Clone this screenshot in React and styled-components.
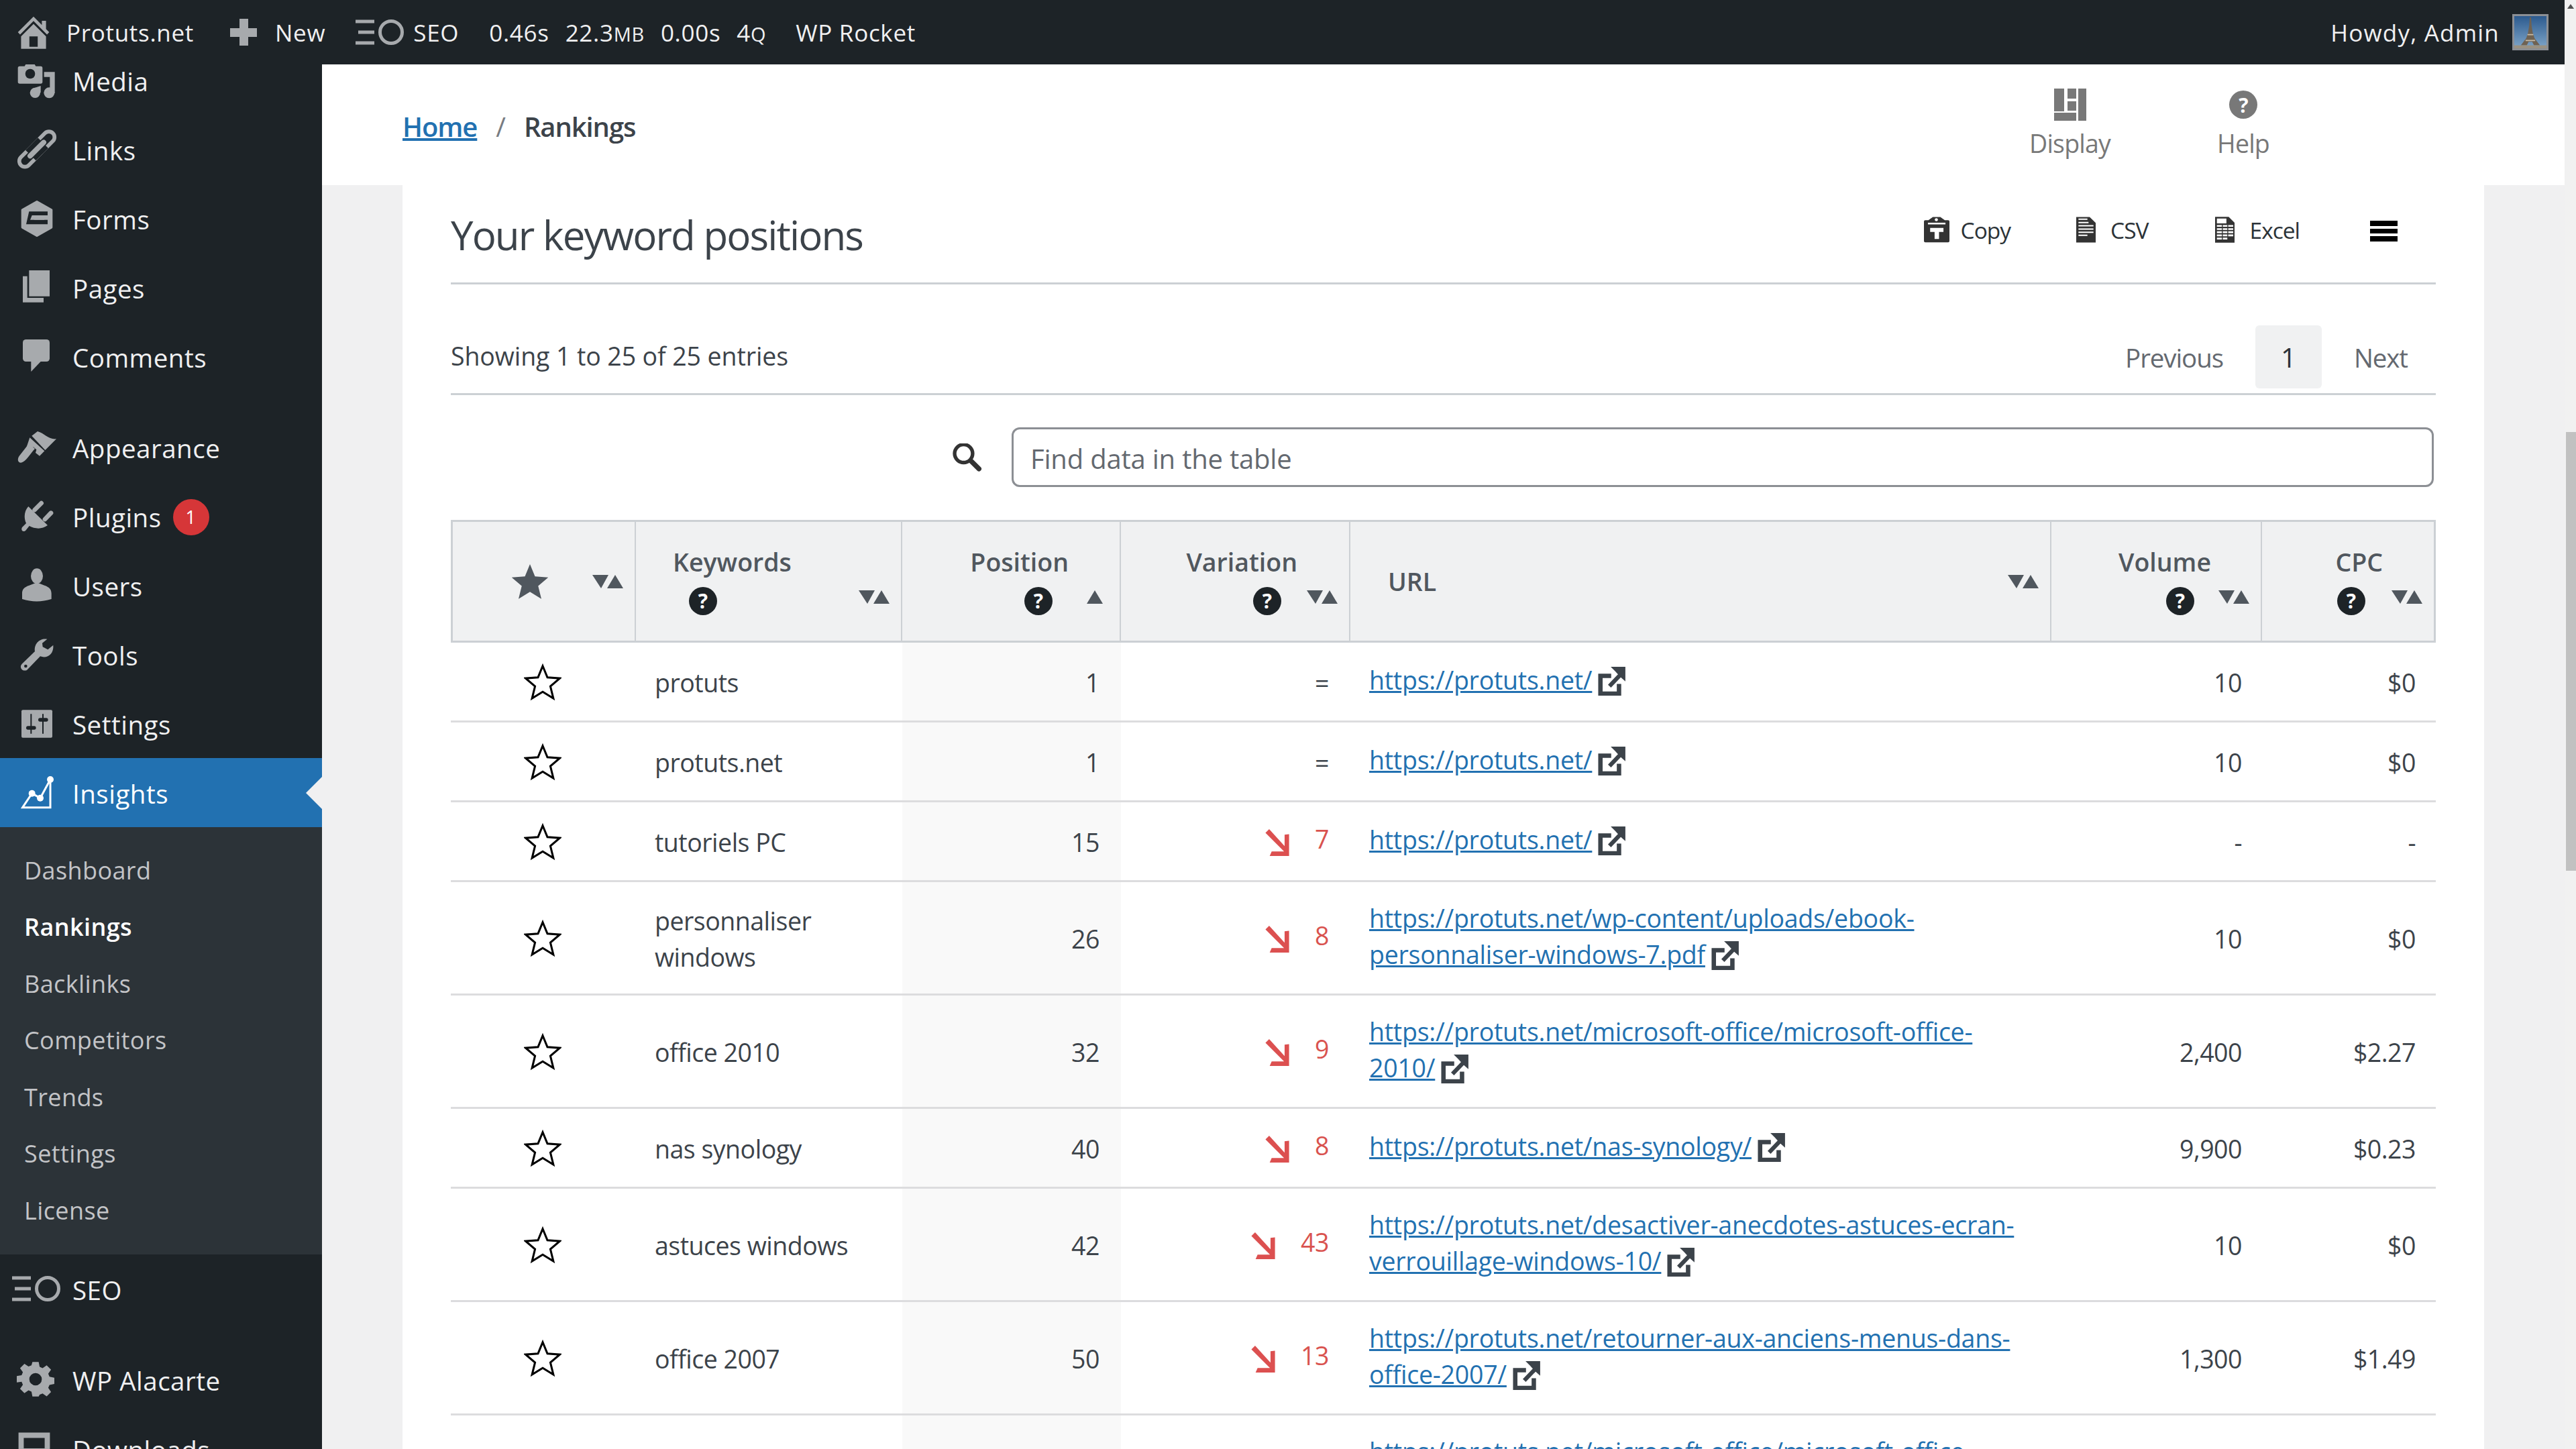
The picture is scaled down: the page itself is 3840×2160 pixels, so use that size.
import React from 'react'
import styled, { createGlobalStyle } from 'styled-components'

const GlobalStyle = createGlobalStyle`
    * { box-sizing: border-box; }
    html, body { margin: 0; padding: 0; height: 100%; overflow: hidden; background: #f0f0f1; }
    body { font-family: "Open Sans", "Noto Sans", sans-serif; color: #3c434a; }
`

const Icon = ({ box, size = 60, children, className }) => (
    <svg className={className} viewBox={box} width={size} height={size} fill="currentColor">{children}</svg>
)

const menuIcons = {
    media: (
        <Icon box="45 -12 180 180">
            <path d="M50 22q0-8 8-8h22l12-20h26l12 20h22q8 0 8 8v62q0 8-8 8H58q-8 0-8-8z" />
            <circle cx="105" cy="48" r="22" fill="#1d2327" />
            <path d="M167 40h48v95h-22V62h-26z" />
            <circle cx="127" cy="133" r="23" />
            <circle cx="190" cy="133" r="24" />
            <path d="M122 112l30-10v30h-30z" />
        </Icon>
    ),
    links: (
        <Icon box="45 297 180 180">
            <g transform="rotate(-45 135 385)" fill="none" stroke="currentColor" strokeWidth="17">
                <rect x="34" y="360" width="122" height="50" rx="25" />
                <rect x="114" y="360" width="122" height="50" rx="25" />
                <rect x="96" y="352" width="78" height="66" fill="#1d2327" stroke="none" />
                <line x1="92" y1="385" x2="178" y2="385" strokeWidth="23" strokeLinecap="round" />
            </g>
        </Icon>
    ),
    forms: (
        <Icon box="40 606 180 180">
            <path d="M130 620l65 37v78l-65 37-65-37v-78z" stroke="currentColor" strokeWidth="10" strokeLinejoin="round" />
            <path d="M95 664h83v17h-70l-8 20h78v20H82z" fill="#1d2327" />
            <path d="M118 690h45v11h-45z" />
        </Icon>
    ),
    pages: (
        <Icon box="40 915 180 180">
            <path d="M95 927h92v116H95z" />
            <path d="M67 953h20v97h73v20H67z" />
        </Icon>
    ),
    comments: (
        <Icon box="40 1224 180 180">
            <rect x="67" y="1236" width="120" height="99" rx="14" />
            <path d="M104 1330v50l48-50z" />
        </Icon>
    ),
    appearance: (
        <Icon box="45 20 180 180">
            <path d="M112 58l26-20c30 8 50 38 84 34l-50 50z" />
            <path d="M103 66l66 60-22 22-18-14 4-14-14-12-20 16-12-10z" />
            <path d="M100 92l26 24c-20 20-40 60-62 62-14 1-18-16-8-30z" />
        </Icon>
    ),
    plugins: (
        <Icon box="40 330 180 180">
            <path d="M92 375l86 84c-26 20-58 16-82 3l-16 20c-10 10-24 0-16-14l18-18c-12-26-8-56 10-75z" />
            <path d="M120 390l30-30M166 432l27-28" stroke="currentColor" strokeWidth="20" strokeLinecap="round" />
        </Icon>
    ),
    users: (
        <Icon box="42 640 180 180">
            <ellipse cx="132" cy="687" rx="27" ry="34" />
            <path d="M66 790v-25c0-34 36-34 66-50 30 16 65 16 65 50v25c-44 14-88 14-131 0z" />
        </Icon>
    ),
    tools: (
        <Icon box="42 945 180 180">
            <path d="M178 965c-32-6-60 20-55 55l-58 56c-14 15 2 36 22 28l60-62c30 12 62-10 58-50l-24 20-23-12-2-17z" />
            <circle cx="82" cy="1086" r="7" fill="#1d2327" />
        </Icon>
    ),
    settings: (
        <Icon box="46 1254 180 180">
            <rect x="67" y="1282" width="138" height="124" rx="6" />
            <g stroke="#1d2327" strokeWidth="6">
                <path d="M110 1300v88M163 1300v88" />
            </g>
            <rect x="88" y="1354" width="44" height="16" rx="8" fill="#1d2327" />
            <rect x="142" y="1318" width="44" height="16" rx="8" fill="#1d2327" />
        </Icon>
    ),
    insights: (
        <Icon box="40 60 180 180">
            <path d="M66 215l42-63 37 21 45-83v125z" fill="none" stroke="currentColor" strokeWidth="9" />
            <circle cx="108" cy="152" r="15" />
            <circle cx="145" cy="173" r="15" />
            <circle cx="190" cy="90" r="15" />
        </Icon>
    ),
    alacarte: (
        <Icon box="0 0 24 24" size={56}>
            <path fillRule="evenodd" d="M10 1h4l.6 3.100 1.900.8 2.600-1.800 2.800 2.800-1.800 2.600.8 1.900 3.100.6v4l-3.100.6-.8 1.900 1.800 2.600-2.800 2.800-2.600-1.800-1.900.8L14 23h-4l-.6-3.100-1.900-.8-2.600 1.800-2.800-2.800 1.800-2.600-.8-1.900L0 14v-4l3.100-.6.8-1.900L2.100 4.900l2.800-2.800 2.600 1.800 1.900-.8zM12 8a4 4 0 1 0 0 8 4 4 0 0 0 0-8z" />
        </Icon>
    ),
    downloads: (
        <Icon box="0 0 20 20" size={52}>
            <path fillRule="evenodd" d="M1 1h18v18H1zM4 4v6h12V4zM7 12v5h6v-5z" />
        </Icon>
    ),
}

const SeoMark = ({ width = 72, height = 38 }) => (
    <svg viewBox="0 0 72 38" width={width} height={height} fill="none" stroke="currentColor">
        <path d="M0 3h28M4 19h24M0 35h28" strokeWidth="5" />
        <circle cx="53" cy="19" r="16.500" strokeWidth="5" />
    </svg>
)

const menu = [
    { label: 'Media', icon: 'media' },
    { label: 'Links', icon: 'links' },
    { label: 'Forms', icon: 'forms' },
    { label: 'Pages', icon: 'pages' },
    { label: 'Comments', icon: 'comments' },
    { label: 'Appearance', icon: 'appearance', gap: true },
    { label: 'Plugins', icon: 'plugins', badge: 1 },
    { label: 'Users', icon: 'users' },
    { label: 'Tools', icon: 'tools' },
    { label: 'Settings', icon: 'settings' },
    { label: 'Insights', icon: 'insights', active: true },
]

const submenu = ['Dashboard', 'Rankings', 'Backlinks', 'Competitors', 'Trends', 'Settings', 'License']

const rows = [
    { keyword: 'protuts', pos: 1, delta: '=', url: ['https://protuts.net/'], volume: '10', cpc: '$0' },
    { keyword: 'protuts.net', pos: 1, delta: '=', url: ['https://protuts.net/'], volume: '10', cpc: '$0' },
    { keyword: 'tutoriels PC', pos: 15, delta: 7, url: ['https://protuts.net/'], volume: '-', cpc: '-' },
    { keyword: 'personnaliser windows', pos: 26, delta: 8, url: ['https://protuts.net/wp-content/uploads/ebook-', 'personnaliser-windows-7.pdf'], volume: '10', cpc: '$0' },
    { keyword: 'office 2010', pos: 32, delta: 9, url: ['https://protuts.net/microsoft-office/microsoft-office-', '2010/'], volume: '2,400', cpc: '$2.27' },
    { keyword: 'nas synology', pos: 40, delta: 8, url: ['https://protuts.net/nas-synology/'], volume: '9,900', cpc: '$0.23' },
    { keyword: 'astuces windows', pos: 42, delta: 43, url: ['https://protuts.net/desactiver-anecdotes-astuces-ecran-', 'verrouillage-windows-10/'], volume: '10', cpc: '$0' },
    { keyword: 'office 2007', pos: 50, delta: 13, url: ['https://protuts.net/retourner-aux-anciens-menus-dans-', 'office-2007/'], volume: '1,300', cpc: '$1.49' },
    { url: ['https://protuts.net/microsoft-office/microsoft-office-', '2007/'], partial: true },
]

const StarIcon = ({ filled }) => (
    <StarSvg viewBox="0 0 24 24" $filled={filled}>
        <path d="M12 1.600l3 7.300 7.900.6-6 5.100 1.900 7.700L12 18.100l-6.800 4.200 1.900-7.700-6-5.100 7.900-.6z" />
    </StarSvg>
)

const SortMark = ({ top, upOnly }) => (
    <SortIcon viewBox="0 0 46 20" $top={top} $upOnly={upOnly}>
        {!upOnly && <path d="M0 0h24L13 20z" />}
        <path d="M34 0l12 20H22z" />
    </SortIcon>
)

const Arrow = () => (
    <ArrowSvg viewBox="65 50 95 108">
        <path d="M65 65l15-15 62 68V72l18-2v88H82l8-18h50z" />
    </ArrowSvg>
)

const ExternalIcon = () => (
    <ExternalSvg viewBox="1355 45 118 118">
        <path d="M1412 82h-44v73h76v-40" fill="none" stroke="currentColor" strokeWidth="18" />
        <path d="M1405 124l50-52" fill="none" stroke="currentColor" strokeWidth="17" />
        <path d="M1410 45h60v60l-20-18-22-24z" />
    </ExternalSvg>
)

function Row({ row }) {
    const down = typeof row.delta === 'number'
    return (
        <BodyRow $tall={row.url.length > 1}>
            <StarCell>{!row.partial && <StarIcon />}</StarCell>
            <KeywordCell>{row.keyword}</KeywordCell>
            <PositionCell>{row.pos}</PositionCell>
            <VariationCell>
                {row.delta !== undefined && (
                    <VariationWrap>
                        {down && <Arrow />}
                        <VariationValue $down={down}>{row.delta}</VariationValue>
                    </VariationWrap>
                )}
            </VariationCell>
            <UrlCell>
                <UrlLink href="#">{row.url[0]}</UrlLink>
                {row.url.length === 1 && <ExternalIcon />}
                {row.url[1] && <br />}
                {row.url[1] && <UrlLink href="#">{row.url[1]}</UrlLink>}
                {row.url[1] && <ExternalIcon />}
            </UrlCell>
            <NumberCell>{row.volume}</NumberCell>
            <NumberCell>{row.cpc}</NumberCell>
        </BodyRow>
    )
}

export default function App() {
    return (
        <Screen>
            <GlobalStyle />
            <Viewport>
                <AdminBar>
                    <AdminGroup $gap={18}>
                        <HomeSvg viewBox="0 0 20 20">
                            <path d="M16 8.500l1.530 1.530-1.060 1.060L10 4.620l-6.470 6.470-1.060-1.060L10 2.500l4 4v-2h2v4zm-6-2.460l6 5.990V18H4v-5.970zM12 17v-5H8v5h4z" />
                        </HomeSvg>
                        <AdminText>Protuts.net</AdminText>
                    </AdminGroup>
                    <AdminGroup $gap={27} $left={54}>
                        <PlusIcon />
                        <AdminText>New</AdminText>
                    </AdminGroup>
                    <AdminGroup $gap={14} $left={45}>
                        <AdminIconWrap><SeoMark /></AdminIconWrap>
                        <AdminText>SEO</AdminText>
                    </AdminGroup>
                    <AdminGroup $gap={24} $left={45}>
                        <AdminText>0.46s</AdminText>
                        <AdminText>22.3<small>MB</small></AdminText>
                        <AdminText>0.00s</AdminText>
                        <AdminText>4<small>Q</small></AdminText>
                    </AdminGroup>
                    <AdminGroup $left={44}>
                        <AdminText>WP Rocket</AdminText>
                    </AdminGroup>
                    <Howdy>
                        <HowdyText>Howdy, Admin</HowdyText>
                        <Avatar viewBox="0 0 54 54">
                            <defs>
                                <linearGradient id="sky" x1="0" y1="0" x2="0" y2="1">
                                    <stop offset="0" stopColor="#2c5a8e" />
                                    <stop offset="1" stopColor="#7fa6c9" />
                                </linearGradient>
                            </defs>
                            <rect width="54" height="54" fill="url(#sky)" />
                            <path d="M26 2h2l1 14 2 12 3 9 9 12H33l-3-6h-6l-3 6H11l9-12 3-9 2-12z" fill="#6f6252" />
                            <path d="M22 30h10v2H22zM19 40h16v2H19z" fill="#c9bda8" />
                            <rect y="49" width="54" height="5" fill="#9b9282" />
                        </Avatar>
                    </Howdy>
                </AdminBar>
                <Body>
                    <Sidebar>
                        <MenuList>
                            {menu.map(item => (
                                <MenuItem key={item.label} $active={item.active} $gap={item.gap}>
                                    <MenuIcon $active={item.active}>{menuIcons[item.icon]}</MenuIcon>
                                    {item.label}
                                    {item.badge && <Badge>{item.badge}</Badge>}
                                    {item.active && <ActiveArrow />}
                                </MenuItem>
                            ))}
                        </MenuList>
                        <Submenu>
                            {submenu.map(label => (
                                <SubmenuItem key={label} $current={label === 'Rankings'}>{label}</SubmenuItem>
                            ))}
                        </Submenu>
                        <MenuList>
                            <MenuItem>
                                <SeoIconWrap><SeoMark /></SeoIconWrap>
                                SEO
                            </MenuItem>
                            <MenuItem $gap>
                                <MenuIcon>{menuIcons.alacarte}</MenuIcon>
                                WP Alacarte
                            </MenuItem>
                            <MenuItem>
                                <MenuIcon>{menuIcons.downloads}</MenuIcon>
                                Downloads
                            </MenuItem>
                        </MenuList>
                    </Sidebar>
                    <Main>
                        <PageHeader>
                            <Breadcrumb>
                                <HomeLink href="#">Home</HomeLink>
                                <Slash>/</Slash>
                                <Crumb>Rankings</Crumb>
                            </Breadcrumb>
                            <HeaderTool $width={123} $left={0}>
                                <svg viewBox="0 0 48 48" width="48" height="48" fill="currentColor">
                                    <path d="M0 0h15v34H0zM20 0h13v15H20zM20 19h13v14H20zM36 0h12v48H36zM0 36h33v12H0z" />
                                </svg>
                                Display
                            </HeaderTool>
                            <HeaderTool $width={80} $left={157}>
                                <ToolHelp>?</ToolHelp>
                                Help
                            </HeaderTool>
                        </PageHeader>
                        <Card>
                            <TitleRow>
                                <Title>Your keyword positions</Title>
                                <ExportBar>
                                    <ExportButton $gap={17}>
                                        <svg viewBox="42 36 115 115" width="38" height="39" fill="#333">
                                            <path d="M42 56q0-6 6-6h14l20-14h34l20 14h15q6 0 6 6v88q0 6-6 6H48q-6 0-6-6z" />
                                            <path d="M60 62h79v7H60zM70 85h60v18h-20v32H90v-32H70z" fill="#fff" />
                                            <circle cx="98" cy="48" r="7" fill="#fff" />
                                        </svg>
                                        Copy
                                    </ExportButton>
                                    <ExportButton $gap={22} $left={98}>
                                        <svg viewBox="735 36 87 114" width="29" height="39" fill="#333">
                                            <path d="M735 36h60l27 26v88h-87z" />
                                            <path d="M745 43h40v6h-40zM745 58h45v6h-45zM745 72h67v6h-67zM745 87h67v6h-67zM745 101h67v6h-67zM745 115h40v6h-40z" fill="#fff" />
                                        </svg>
                                        CSV
                                    </ExportButton>
                                    <ExportButton $gap={23} $left={99}>
                                        <svg viewBox="1362 36 86 114" width="29" height="39" fill="#333">
                                            <path d="M1362 36h60l26 26v88h-86z" />
                                            <path d="M1370 43h42v22h-42zM1370 72h22v8h-22zM1396 72h20v8h-20zM1420 72h22v8h-22zM1370 86h22v8h-22zM1396 86h20v8h-20zM1420 86h22v8h-22zM1370 100h22v8h-22zM1396 100h20v8h-20zM1420 100h22v8h-22zM1370 114h22v8h-22zM1396 114h20v8h-20zM1420 114h22v8h-22zM1370 128h22v8h-22zM1396 128h20v8h-20z" fill="#fff" />
                                        </svg>
                                        Excel
                                    </ExportButton>
                                    <Hamburger><span /><span /><span /></Hamburger>
                                </ExportBar>
                            </TitleRow>
                            <InfoRow>
                                <Showing>Showing 1 to 25 of 25 entries</Showing>
                                <Pager>
                                    <PagerLink>Previous</PagerLink>
                                    <PagerCurrent>1</PagerCurrent>
                                    <PagerLink>Next</PagerLink>
                                </Pager>
                            </InfoRow>
                            <SearchRow>
                                <SearchGlass viewBox="55 85 140 140" fill="none" stroke="#333">
                                    <circle cx="110" cy="130" r="40" strokeWidth="16" />
                                    <path d="M145 165l33 33" strokeWidth="22" strokeLinecap="round" />
                                </SearchGlass>
                                <SearchInput placeholder="Find data in the table" />
                            </SearchRow>
                            <Table>
                                <colgroup>
                                    <col style={{ width: 276 }} />
                                    <col style={{ width: 397 }} />
                                    <col style={{ width: 326 }} />
                                    <col style={{ width: 342 }} />
                                    <col style={{ width: 1045 }} />
                                    <col style={{ width: 314 }} />
                                    <col style={{ width: 259 }} />
                                </colgroup>
                                <thead>
                                    <tr>
                                        <HeadCell $align="center" $pad="0 42px 0 0">
                                            <StarIcon filled />
                                            <SortMark top={79} />
                                        </HeadCell>
                                        <HeadCell $align="left" $pad="0 0 3px 55px">
                                            Keywords
                                            <HelpRow $left={24}><HelpMark>?</HelpMark></HelpRow>
                                            <SortMark top={102} />
                                        </HeadCell>
                                        <HeadCell $align="right" $pad="0 76px 3px 0">
                                            Position
                                            <HelpRow $right={24}><HelpMark>?</HelpMark></HelpRow>
                                            <SortMark top={102} upOnly />
                                        </HeadCell>
                                        <HeadCell $align="right" $pad="0 77px 3px 0">
                                            Variation
                                            <HelpRow $right={24}><HelpMark>?</HelpMark></HelpRow>
                                            <SortMark top={102} />
                                        </HeadCell>
                                        <HeadCell $align="left" $pad="0 0 0 56px">
                                            URL
                                            <SortMark top={79} />
                                        </HeadCell>
                                        <HeadCell $align="right" $pad="0 74px 3px 0">
                                            Volume
                                            <HelpRow $right={25}><HelpMark>?</HelpMark></HelpRow>
                                            <SortMark top={102} />
                                        </HeadCell>
                                        <HeadCell $align="right" $pad="0 76px 3px 0">
                                            CPC
                                            <HelpRow $right={26}><HelpMark>?</HelpMark></HelpRow>
                                            <SortMark top={102} />
                                        </HeadCell>
                                    </tr>
                                </thead>
                                <tbody>
                                    {rows.map((row, i) => <Row key={i} row={row} />)}
                                </tbody>
                            </Table>
                        </Card>
                    </Main>
                </Body>
            </Viewport>
            <ScrollTrack>
                <ScrollUp />
                <ScrollThumb />
            </ScrollTrack>
        </Screen>
    )
}

const Screen = styled.div`
    display: flex;
    height: 100vh;
    overflow: hidden;
`

const Viewport = styled.div`
    flex: 1;
    min-width: 0;
    display: flex;
    flex-direction: column;
`

const AdminBar = styled.header`
    position: relative;
    z-index: 2;
    flex: none;
    height: 96px;
    padding: 0 24px 0 27px;
    display: flex;
    align-items: center;
    background: #1d2327;
    color: #f0f0f1;
`

const AdminGroup = styled.div`
    display: flex;
    align-items: center;
    gap: ${props => props.$gap || 0}px;
    margin-left: ${props => props.$left || 0}px;
`

const AdminText = styled.span`
    font-size: 35px;
    letter-spacing: 0.7px;
    white-space: nowrap;
    small {
        font-size: 29px;
    }
`

const HowdyText = styled(AdminText)`
    letter-spacing: 1.200px;
`

const AdminIconWrap = styled.span`
    display: flex;
    color: #a7aaad;
`

const HomeSvg = styled.svg`
    width: 62px;
    height: 62px;
    margin: 0 0 0 -8px;
    fill: #a7aaad;
`

const PlusIcon = styled.span`
    width: 40px;
    height: 40px;
    background:
        linear-gradient(#a7aaad, #a7aaad) center / 13px 100% no-repeat,
        linear-gradient(#a7aaad, #a7aaad) center / 100% 13px no-repeat;
`

const Howdy = styled.div`
    margin-left: auto;
    display: flex;
    align-items: center;
    gap: 19px;
`

const Avatar = styled.svg`
    width: 54px;
    height: 54px;
    border: 3px solid #8c8f94;
`

const Body = styled.div`
    flex: 1;
    min-height: 0;
    display: flex;
    overflow: hidden;
`

const Sidebar = styled.nav`
    flex: none;
    width: 480px;
    background: #1d2327;
    overflow: hidden;
    padding-top: 0;
`

const MenuList = styled.ul`
    list-style: none;
    margin: 0;
    padding: 0;
    &:first-child {
        margin-top: -28px;
    }
`

const MenuItem = styled.li`
    position: relative;
    height: 103px;
    margin-top: ${props => props.$gap ? 32 : 0}px;
    padding: 3px 0 0 108px;
    display: flex;
    align-items: center;
    font-size: 38.500px;
    line-height: 44px;
    letter-spacing: 0.5px;
    color: ${props => props.$active ? '#fff' : '#f0f0f1'};
    background: ${props => props.$active ? '#2271b1' : 'transparent'};
`

const MenuIcon = styled.span`
    position: absolute;
    left: 25px;
    top: 50%;
    transform: translateY(-50%);
    display: flex;
    color: ${props => props.$active ? '#fff' : '#a7aaad'};
`

const SeoIconWrap = styled.span`
    position: absolute;
    left: 18px;
    top: 50%;
    transform: translateY(-50%);
    display: flex;
    color: #a7aaad;
`

const Badge = styled.span`
    width: 54px;
    height: 54px;
    margin-left: 17px;
    border-radius: 50%;
    display: flex;
    align-items: center;
    justify-content: center;
    background: #d63638;
    color: #fff;
    font-size: 27px;
`

const ActiveArrow = styled.span`
    position: absolute;
    right: 0;
    top: 50%;
    transform: translateY(-50%);
    border-style: solid;
    border-width: 24px 24px 24px 0;
    border-color: transparent #f0f0f1 transparent transparent;
`

const Submenu = styled.ul`
    list-style: none;
    margin: 0;
    padding: 22px 0 23px;
    background: #2c3338;
`

const SubmenuItem = styled.li`
    height: 84.500px;
    padding-left: 36px;
    display: flex;
    align-items: center;
    font-size: 36px;
    letter-spacing: 0.4px;
    color: ${props => props.$current ? '#fff' : '#c3c4c7'};
    font-weight: ${props => props.$current ? 600 : 400};
`

const Main = styled.main`
    flex: 1;
    min-width: 0;
    background: #f0f0f1;
`

const PageHeader = styled.div`
    height: 180px;
    padding: 36px 0 0 120px;
    display: flex;
    background: #fff;
`

const Breadcrumb = styled.div`
    flex: 1;
    height: 112px;
    display: flex;
    align-items: center;
    font-size: 40px;
    letter-spacing: -1.100px;
    font-weight: 600;
`

const HomeLink = styled.a`
    color: #2271b1;
    text-decoration: underline;
`

const Slash = styled.span`
    margin: 0 28px;
    color: #787c82;
    font-weight: 400;
`

const Crumb = styled.span`
    color: #3c434a;
`

const HeaderTool = styled.div`
    width: ${props => props.$width}px;
    margin-left: ${props => props.$left}px;
    display: flex;
    flex-direction: column;
    align-items: center;
    gap: 8px;
    height: 120px;
    color: #787878;
    font-size: 37.500px;
    letter-spacing: -0.8px;
    &:last-child {
        margin-right: 439px;
    }
`

const ToolHelp = styled.span`
    width: 42px;
    height: 42px;
    margin: 3px 0;
    border-radius: 50%;
    display: flex;
    align-items: center;
    justify-content: center;
    background: #787878;
    color: #fff;
    font-size: 30px;
    font-weight: 700;
`

const Card = styled.section`
    margin: 0 120px;
    padding: 0 72px;
    background: #fff;
`

const TitleRow = styled.div`
    height: 148px;
    padding: 3px 57px 0 0;
    display: flex;
    align-items: center;
    justify-content: space-between;
    border-bottom: 3px solid #ccd0d4;
`

const Title = styled.h1`
    margin: 0;
    font-size: 60px;
    font-weight: 400;
    letter-spacing: -1.900px;
    color: #3c434a;
`

const ExportBar = styled.div`
    display: flex;
    align-items: center;
    margin: -15px -3px 0 0;
`

const ExportButton = styled.span`
    display: flex;
    align-items: center;
    gap: ${props => props.$gap}px;
    margin-left: ${props => props.$left || 0}px;
    font-size: 33.500px;
    letter-spacing: -1px;
    color: #2c3338;
`

const Hamburger = styled.span`
    width: 41px;
    margin: 4px 3px 0 105px;
    display: flex;
    flex-direction: column;
    gap: 4px;
    span {
        height: 7.500px;
        background: #000;
    }
`

const InfoRow = styled.div`
    padding: 61px 42px 7px 0;
    display: flex;
    align-items: center;
    justify-content: space-between;
    border-bottom: 3px solid #ccd0d4;
`

const Showing = styled.div`
    margin-top: -3px;
    font-size: 37.500px;
    letter-spacing: -0.1px;
`

const Pager = styled.div`
    display: flex;
    align-items: center;
    gap: 48px;
`

const PagerLink = styled.span`
    margin-top: 2px;
    font-size: 38.500px;
    letter-spacing: -1.100px;
    color: #646970;
`

const PagerCurrent = styled.span`
    width: 99px;
    height: 94px;
    border-radius: 6px;
    display: flex;
    align-items: center;
    justify-content: center;
    background: #f0f1f2;
    font-size: 40px;
    color: #2c3338;
`

const SearchRow = styled.div`
    padding: 48px 3px 49px 0;
    display: flex;
    align-items: center;
    justify-content: flex-end;
    gap: 43px;
`

const SearchGlass = styled.svg`
    width: 47px;
    height: 47px;
    margin-top: 5px;
`

const SearchInput = styled.input`
    width: 2120px;
    height: 89px;
    padding: 3px 25px 0;
    border: 3px solid #8c8f94;
    border-radius: 12px;
    outline: none;
    font: inherit;
    font-size: 40px;
    letter-spacing: -0.2px;
    &::placeholder {
        color: #646970;
        opacity: 1;
    }
`

const Table = styled.table`
    width: 2959px;
    table-layout: fixed;
    border-collapse: separate;
    border-spacing: 0;
`

const HeadCell = styled.th`
    position: relative;
    height: 183px;
    padding: ${props => props.$pad};
    text-align: ${props => props.$align};
    vertical-align: middle;
    border-top: 3px solid #ccd0d4;
    border-bottom: 3px solid #ccd0d4;
    border-right: 2px solid #ccd0d4;
    background: #f0f1f2;
    font-size: 37.500px;
    font-weight: 600;
    letter-spacing: 0;
    line-height: 48px;
    color: #50575e;
    &:first-child {
        border-left: 3px solid #ccd0d4;
    }
    &:last-child {
        border-right: 3px solid #ccd0d4;
    }
`

const HelpRow = styled.div`
    margin: 13px ${props => props.$right || 0}px 0 ${props => props.$left || 0}px;
    display: flex;
    justify-content: ${props => props.$right ? 'flex-end' : 'flex-start'};
`

const HelpMark = styled.span`
    width: 42px;
    height: 42px;
    border-radius: 50%;
    display: flex;
    align-items: center;
    justify-content: center;
    background: #1d2327;
    color: #fff;
    font-size: 30px;
    font-weight: 700;
    letter-spacing: 0;
`

const SortIcon = styled.svg`
    position: absolute;
    top: ${props => props.$top}px;
    right: ${props => props.$upOnly ? 25 : 17}px;
    width: 46px;
    height: 20px;
    fill: #50575e;
`

const StarSvg = styled.svg`
    width: ${props => props.$filled ? 60 : 56}px;
    height: ${props => props.$filled ? 60 : 56}px;
    display: inline-block;
    vertical-align: middle;
    fill: ${props => props.$filled ? '#50575e' : '#fff'};
    stroke: ${props => props.$filled ? 'none' : '#000'};
    stroke-width: 1.300;
`

const BodyRow = styled.tr`
    height: ${props => props.$tall ? 169 : 119}px;
`

const Cell = styled.td`
    padding: 3px 30px 0;
    border-bottom: 3px solid #dcdcde;
    font-size: 37.500px;
    letter-spacing: -0.5px;
    line-height: 54px;
    color: #3c434a;
    vertical-align: middle;
`

const StarCell = styled(Cell)`
    padding: 0 3px 0 0;
    text-align: center;
`

const KeywordCell = styled(Cell)`
    padding-left: 28px;
`

const PositionCell = styled(Cell)`
    padding-right: 32px;
    text-align: right;
    background: #f9f9f9;
`

const VariationCell = styled(Cell)`
    padding-right: 32px;
`

const VariationWrap = styled.div`
    display: flex;
    align-items: center;
    justify-content: flex-end;
    gap: 38px;
`

const VariationValue = styled.span`
    color: ${props => props.$down ? '#d9534f' : '#3c434a'};
    position: relative;
    top: ${props => props.$down ? -5 : 0}px;
`

const ArrowSvg = styled.svg`
    width: 36px;
    height: 40px;
    fill: #dc5050;
`

const UrlCell = styled(Cell)`
    padding: 3px 30px 8px 28px;
    white-space: nowrap;
    letter-spacing: -0.25px;
`

const UrlLink = styled.a`
    color: #2271b1;
    text-decoration: underline;
`

const ExternalSvg = styled.svg`
    width: 43px;
    height: 43px;
    margin-left: 8px;
    vertical-align: -9px;
    fill: #3c434a;
    color: #3c434a;
`

const NumberCell = styled(Cell)`
    text-align: right;
`

const ScrollTrack = styled.aside`
    flex: none;
    width: 17px;
    background: #f1f1f1;
    position: relative;
`

const ScrollUp = styled.span`
    display: block;
    width: 0;
    margin: 6px auto 0;
    border-style: solid;
    border-width: 0 5px 7px 5px;
    border-color: transparent transparent #505050 transparent;
`

const ScrollThumb = styled.span`
    display: block;
    width: 15px;
    height: 654px;
    margin: 631px 0 0 2px;
    background: #c1c1c1;
`
